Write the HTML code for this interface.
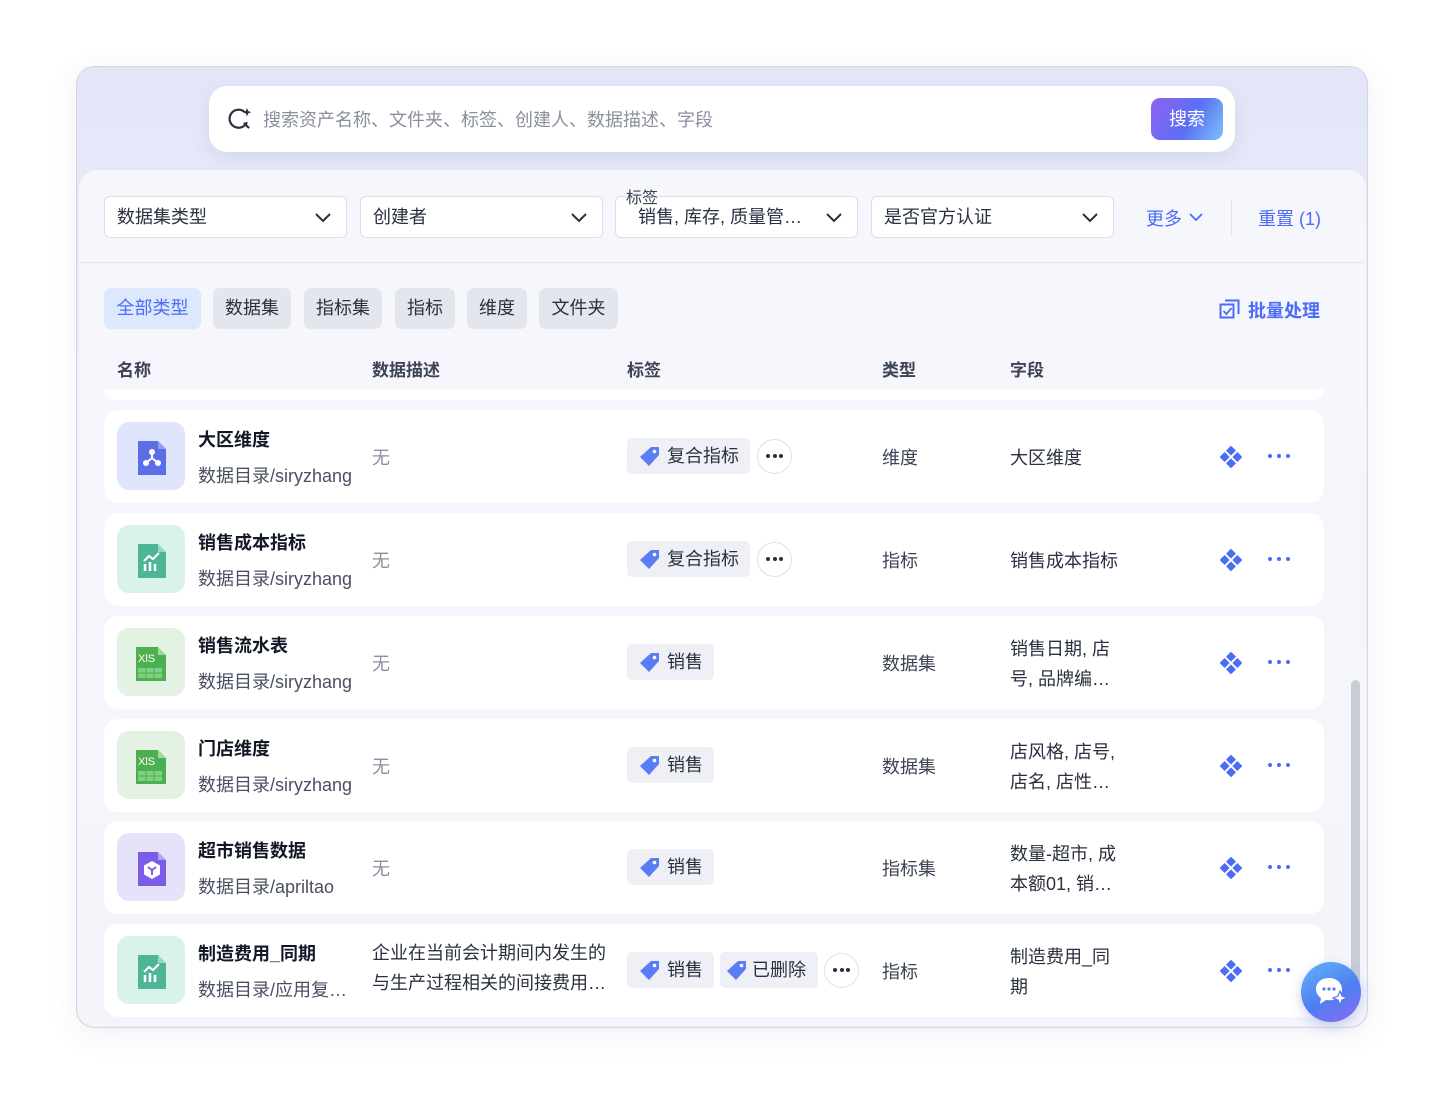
<!DOCTYPE html>
<html><head><meta charset="utf-8">
<style>
*{box-sizing:border-box;margin:0;padding:0}
body{width:1444px;height:1098px;background:#fff;font-family:"Liberation Sans","Noto Sans CJK SC",sans-serif;position:relative;overflow:hidden;color:#1d2433}
.a{position:absolute}
.frame{left:76px;top:66px;width:1292px;height:962px;border-radius:18px;background:linear-gradient(180deg,#e3e6f7 0%,#eceffb 40%,#f0f2fb 100%);border:1px solid #d4d7e2;box-shadow:0 6px 30px rgba(60,70,120,.08)}
.search{left:209px;top:86px;width:1026px;height:66px;background:#fff;border-radius:18px;box-shadow:0 6px 18px rgba(90,100,160,.12)}
.panel{left:79px;top:170px;width:1287px;height:856px;border-radius:18px;background:linear-gradient(180deg,#f6f7fc,#f4f5fb);}
.sel{height:42px;top:196px;width:243px;background:#fff;border:1px solid #dcdfe8;border-radius:6px;font-size:18px;line-height:40px;padding-left:12px;color:#2a3040}
.chev{position:absolute;right:14px;top:13px}
.pill{top:288px;height:41px;border-radius:7px;background:#e4e6ee;font-size:18px;line-height:41px;text-align:center;color:#2a3040}
.th{top:356px;font-size:17px;font-weight:bold;color:#3c4354}
.card{left:104px;width:1220px;height:93px;background:#fff;border-radius:14px}
.ic{left:13px;top:12px;width:68px;height:68px;border-radius:12px}
.t{left:94px;top:16px;font-size:18px;font-weight:bold;color:#121826}
.s{left:94px;top:52px;font-size:18px;color:#4a5063}
.no{left:268px;top:34px;font-size:18px;color:#8a8f9c}
.tag{top:28px;height:36px;background:#eef0f5;border-radius:5px;font-size:18px;line-height:36px;color:#2a3040;padding-left:40px}
.tag svg{position:absolute;left:12px;top:8px}
.more{top:29px;width:35px;height:35px;border:1.5px solid #dfe1e8;border-radius:50%;background:#fff}
.more i,.dots i{position:absolute;width:4px;height:4px;border-radius:50%}
.more i{top:14px;background:#2a3040}
.ty{left:778px;top:34px;font-size:18px;color:#3c4354}
.f{left:906px;top:34px;font-size:18px;color:#2a3040}
.f2{left:906px;top:18px;font-size:18px;line-height:30px;color:#2a3040}
.dia{left:1116px;top:36px}
.dots{left:1164px;top:44px;width:22px;height:4px}
.dots i{top:0;background:#4a6cf7}
</style></head><body>
<div class="a frame"></div>
<div class="a search">
  <svg class="a" style="left:18px;top:20px" width="26" height="26" viewBox="0 0 26 26"><path d="M17 5.5A9 9 0 1 0 19.5 17" fill="none" stroke="#2a3040" stroke-width="2.2" stroke-linecap="round"/><path d="M17.5 17.5l4 4" stroke="#2a3040" stroke-width="2.2" stroke-linecap="round"/><path d="M20 2l1.2 3 3 1.2-3 1.2L20 10.4l-1.2-3-3-1.2 3-1.2z" fill="#2a3040"/></svg>
  <div class="a" style="left:54px;top:20px;font-size:18px;color:#8a8f9c">搜索资产名称、文件夹、标签、创建人、数据描述、字段</div>
  <div class="a" style="left:942px;top:12px;width:72px;height:42px;border-radius:9px;background:linear-gradient(120deg,#8d63f2,#5b6ff4 55%,#7fc2fb);color:#fff;font-size:18px;line-height:42px;text-align:center">搜索</div>
</div>
<div class="a panel"></div>
<div class="a sel" style="left:104px">数据集类型<svg class="chev" width="18" height="14" viewBox="0 0 18 14"><path d="M2 4l7 7 7-7" fill="none" stroke="#2a3040" stroke-width="2"/></svg></div>
<div class="a sel" style="left:360px">创建者<svg class="chev" width="18" height="14" viewBox="0 0 18 14"><path d="M2 4l7 7 7-7" fill="none" stroke="#2a3040" stroke-width="2"/></svg></div>
<div class="a sel" style="left:615px;padding-left:22px">销售, 库存, 质量管…<svg class="chev" width="18" height="14" viewBox="0 0 18 14"><path d="M2 4l7 7 7-7" fill="none" stroke="#2a3040" stroke-width="2"/></svg></div>
<div class="a" style="left:626px;top:184px;font-size:16px;color:#3c4354;background:linear-gradient(#f6f7fc 60%,transparent 60%)">标签</div>
<div class="a sel" style="left:871px">是否官方认证<svg class="chev" width="18" height="14" viewBox="0 0 18 14"><path d="M2 4l7 7 7-7" fill="none" stroke="#2a3040" stroke-width="2"/></svg></div>
<div class="a" style="left:1146px;top:205px;font-size:18px;color:#4a6cf7">更多</div>
<svg class="a" style="left:1188px;top:211px" width="16" height="12" viewBox="0 0 16 12"><path d="M2 3l6 6 6-6" fill="none" stroke="#4a6cf7" stroke-width="1.8"/></svg>
<div class="a" style="left:1231px;top:199px;width:1px;height:36px;background:#dfe2ea"></div>
<div class="a" style="left:1258px;top:205px;font-size:18px;color:#4a6cf7">重置 (1)</div>
<div class="a" style="left:80px;top:262px;width:1284px;height:1px;background:#e2e4ec"></div>
<div class="a pill" style="left:104px;width:97px;background:#dde8fd;color:#4a6cf7">全部类型</div>
<div class="a pill" style="left:213px;width:78px">数据集</div>
<div class="a pill" style="left:304px;width:78px">指标集</div>
<div class="a pill" style="left:395px;width:60px">指标</div>
<div class="a pill" style="left:467px;width:60px">维度</div>
<div class="a pill" style="left:539px;width:79px">文件夹</div>
<svg class="a" style="left:1219px;top:299px" width="21" height="21" viewBox="0 0 21 21"><rect x="1.5" y="5.5" width="13" height="13" fill="none" stroke="#4a6cf7" stroke-width="2"/><path d="M6 1.5h13.5V15" fill="none" stroke="#4a6cf7" stroke-width="2"/><path d="M4.5 12l3 3 5-6" fill="none" stroke="#4a6cf7" stroke-width="1.8"/></svg>
<div class="a" style="left:1248px;top:297px;font-size:18px;color:#4a6cf7;font-weight:bold">批量处理</div>
<div class="a th" style="left:117px">名称</div>
<div class="a th" style="left:372px">数据描述</div>
<div class="a th" style="left:627px">标签</div>
<div class="a th" style="left:882px">类型</div>
<div class="a th" style="left:1010px">字段</div>
<div class="a" style="left:104px;top:389px;width:1220px;height:11px;background:#fff;border-radius:0 0 14px 14px"></div>
<div class="a" style="left:1351px;top:680px;width:9px;height:312px;border-radius:5px;background:#c9ccd5"></div>

<div class="a card" style="top:410px">
 <div class="a ic" style="background:#dfe5fc"><svg class="a" style="left:18px;top:16px" width="36" height="40" viewBox="0 0 36 40"><path d="M3 3h20l8 8v26H3z" fill="#5b6ee8"/><path d="M23 3v8h8z" fill="#8f9cf0"/><circle cx="17" cy="14" r="3" fill="#fff"/><circle cx="11" cy="25" r="3" fill="#fff"/><circle cx="23" cy="25" r="3" fill="#fff"/><path d="M17 14v6l-6 5M17 20l6 5" stroke="#fff" stroke-width="2" fill="none"/></svg></div>
 <div class="a t">大区维度</div><div class="a s">数据目录/siryzhang</div><div class="a no">无</div>
 <div class="a tag" style="left:523px;width:123px"><svg width="22" height="22" viewBox="0 0 22 22"><path d="M12 1h8v8L10 20 1 11z" fill="#5b7cf7"/><circle cx="15.5" cy="5.5" r="1.8" fill="#fff"/></svg>复合指标</div>
 <div class="a more" style="left:653px"><i style="left:8px"></i><i style="left:14.5px"></i><i style="left:21px"></i></div>
 <div class="a ty">维度</div><div class="a f">大区维度</div>
 <svg class="a dia" width="22" height="22" viewBox="0 0 22 22"><g fill="#4a6cf7" transform="rotate(45 11 11)"><rect x="3" y="3" width="7" height="7"/><rect x="12" y="3" width="7" height="7"/><rect x="3" y="12" width="7" height="7"/><rect x="12" y="12" width="7" height="7"/></g></svg>
 <div class="a dots"><i style="left:0"></i><i style="left:9px"></i><i style="left:18px"></i></div>
</div>

<div class="a card" style="top:513px">
 <div class="a ic" style="background:#daf3ea"><svg class="a" style="left:18px;top:16px" width="36" height="40" viewBox="0 0 36 40"><path d="M3 3h20l8 8v26H3z" fill="#4fb597"/><path d="M23 3v8h8z" fill="#93dcc4"/><path d="M10 30v-7M15 30v-9M20 30v-7" stroke="#fff" stroke-width="2.5"/><path d="M9 20l5-5 4 3 6-6" stroke="#fff" stroke-width="2" fill="none"/></svg></div>
 <div class="a t">销售成本指标</div><div class="a s">数据目录/siryzhang</div><div class="a no">无</div>
 <div class="a tag" style="left:523px;width:123px"><svg width="22" height="22" viewBox="0 0 22 22"><path d="M12 1h8v8L10 20 1 11z" fill="#5b7cf7"/><circle cx="15.5" cy="5.5" r="1.8" fill="#fff"/></svg>复合指标</div>
 <div class="a more" style="left:653px"><i style="left:8px"></i><i style="left:14.5px"></i><i style="left:21px"></i></div>
 <div class="a ty">指标</div><div class="a f">销售成本指标</div>
 <svg class="a dia" width="22" height="22" viewBox="0 0 22 22"><g fill="#4a6cf7" transform="rotate(45 11 11)"><rect x="3" y="3" width="7" height="7"/><rect x="12" y="3" width="7" height="7"/><rect x="3" y="12" width="7" height="7"/><rect x="12" y="12" width="7" height="7"/></g></svg>
 <div class="a dots"><i style="left:0"></i><i style="left:9px"></i><i style="left:18px"></i></div>
</div>

<div class="a card" style="top:616px">
 <div class="a ic" style="background:#e3f2e3"><svg class="a" style="left:16px;top:16px" width="38" height="40" viewBox="0 0 38 40"><path d="M3 3h22l8 8v26H3z" fill="#4caf50"/><path d="M25 3v8h8z" fill="#9edb9f"/><text x="5" y="18" font-size="11" fill="#fff" font-family="Liberation Sans">XlS</text><path d="M5 24h24v10H5z" fill="#7fcf82"/><path d="M5 29h24M13 24v10M21 24v10" stroke="#4caf50"/></svg></div>
 <div class="a t">销售流水表</div><div class="a s">数据目录/siryzhang</div><div class="a no">无</div>
 <div class="a tag" style="left:523px;width:87px"><svg width="22" height="22" viewBox="0 0 22 22"><path d="M12 1h8v8L10 20 1 11z" fill="#5b7cf7"/><circle cx="15.5" cy="5.5" r="1.8" fill="#fff"/></svg>销售</div>
 <div class="a ty">数据集</div><div class="a f2">销售日期, 店<br>号, 品牌编…</div>
 <svg class="a dia" width="22" height="22" viewBox="0 0 22 22"><g fill="#4a6cf7" transform="rotate(45 11 11)"><rect x="3" y="3" width="7" height="7"/><rect x="12" y="3" width="7" height="7"/><rect x="3" y="12" width="7" height="7"/><rect x="12" y="12" width="7" height="7"/></g></svg>
 <div class="a dots"><i style="left:0"></i><i style="left:9px"></i><i style="left:18px"></i></div>
</div>

<div class="a card" style="top:719px">
 <div class="a ic" style="background:#e3f2e3"><svg class="a" style="left:16px;top:16px" width="38" height="40" viewBox="0 0 38 40"><path d="M3 3h22l8 8v26H3z" fill="#4caf50"/><path d="M25 3v8h8z" fill="#9edb9f"/><text x="5" y="18" font-size="11" fill="#fff" font-family="Liberation Sans">XlS</text><path d="M5 24h24v10H5z" fill="#7fcf82"/><path d="M5 29h24M13 24v10M21 24v10" stroke="#4caf50"/></svg></div>
 <div class="a t">门店维度</div><div class="a s">数据目录/siryzhang</div><div class="a no">无</div>
 <div class="a tag" style="left:523px;width:87px"><svg width="22" height="22" viewBox="0 0 22 22"><path d="M12 1h8v8L10 20 1 11z" fill="#5b7cf7"/><circle cx="15.5" cy="5.5" r="1.8" fill="#fff"/></svg>销售</div>
 <div class="a ty">数据集</div><div class="a f2">店风格, 店号,<br>店名, 店性…</div>
 <svg class="a dia" width="22" height="22" viewBox="0 0 22 22"><g fill="#4a6cf7" transform="rotate(45 11 11)"><rect x="3" y="3" width="7" height="7"/><rect x="12" y="3" width="7" height="7"/><rect x="3" y="12" width="7" height="7"/><rect x="12" y="12" width="7" height="7"/></g></svg>
 <div class="a dots"><i style="left:0"></i><i style="left:9px"></i><i style="left:18px"></i></div>
</div>

<div class="a card" style="top:821px">
 <div class="a ic" style="background:#e6e2fa"><svg class="a" style="left:18px;top:16px" width="36" height="40" viewBox="0 0 36 40"><path d="M3 3h20l8 8v26H3z" fill="#7b5ce6"/><path d="M23 3v8h8z" fill="#b4a3f3"/><path d="M17 12l8 4.5v9L17 30l-8-4.5v-9z" fill="#fff"/><path d="M13 18l4 3 4-3M17 21v5" stroke="#7b5ce6" stroke-width="2" fill="none"/></svg></div>
 <div class="a t">超市销售数据</div><div class="a s">数据目录/apriltao</div><div class="a no">无</div>
 <div class="a tag" style="left:523px;width:87px"><svg width="22" height="22" viewBox="0 0 22 22"><path d="M12 1h8v8L10 20 1 11z" fill="#5b7cf7"/><circle cx="15.5" cy="5.5" r="1.8" fill="#fff"/></svg>销售</div>
 <div class="a ty">指标集</div><div class="a f2">数量-超市, 成<br>本额01, 销…</div>
 <svg class="a dia" width="22" height="22" viewBox="0 0 22 22"><g fill="#4a6cf7" transform="rotate(45 11 11)"><rect x="3" y="3" width="7" height="7"/><rect x="12" y="3" width="7" height="7"/><rect x="3" y="12" width="7" height="7"/><rect x="12" y="12" width="7" height="7"/></g></svg>
 <div class="a dots"><i style="left:0"></i><i style="left:9px"></i><i style="left:18px"></i></div>
</div>

<div class="a card" style="top:924px">
 <div class="a ic" style="background:#daf3ea"><svg class="a" style="left:18px;top:16px" width="36" height="40" viewBox="0 0 36 40"><path d="M3 3h20l8 8v26H3z" fill="#4fb597"/><path d="M23 3v8h8z" fill="#93dcc4"/><path d="M10 30v-7M15 30v-9M20 30v-7" stroke="#fff" stroke-width="2.5"/><path d="M9 20l5-5 4 3 6-6" stroke="#fff" stroke-width="2" fill="none"/></svg></div>
 <div class="a t">制造费用_同期</div><div class="a s">数据目录/应用复…</div>
 <div class="a" style="left:268px;top:14px;font-size:18px;line-height:30px;color:#2a3040">企业在当前会计期间内发生的<br>与生产过程相关的间接费用…</div>
 <div class="a tag" style="left:523px;width:87px"><svg width="22" height="22" viewBox="0 0 22 22"><path d="M12 1h8v8L10 20 1 11z" fill="#5b7cf7"/><circle cx="15.5" cy="5.5" r="1.8" fill="#fff"/></svg>销售</div>
 <div class="a tag" style="left:616px;width:98px;padding-left:32px"><svg style="left:6px" width="22" height="22" viewBox="0 0 22 22"><path d="M12 1h8v8L10 20 1 11z" fill="#5b7cf7"/><circle cx="15.5" cy="5.5" r="1.8" fill="#fff"/></svg>已删除</div>
 <div class="a more" style="left:720px"><i style="left:8px"></i><i style="left:14.5px"></i><i style="left:21px"></i></div>
 <div class="a ty">指标</div><div class="a f2">制造费用_同<br>期</div>
 <svg class="a dia" width="22" height="22" viewBox="0 0 22 22"><g fill="#4a6cf7" transform="rotate(45 11 11)"><rect x="3" y="3" width="7" height="7"/><rect x="12" y="3" width="7" height="7"/><rect x="3" y="12" width="7" height="7"/><rect x="12" y="12" width="7" height="7"/></g></svg>
 <div class="a dots"><i style="left:0"></i><i style="left:9px"></i><i style="left:18px"></i></div>
</div>

<div class="a" style="left:1301px;top:962px;width:60px;height:60px;border-radius:50%;background:linear-gradient(150deg,#62b4f8,#4f7ef2 55%,#8a6cf0);box-shadow:0 4px 12px rgba(80,100,200,.3)">
 <svg class="a" style="left:13px;top:14px" width="36" height="34" viewBox="0 0 36 34"><path d="M15 2C7 2 2 7 2 13c0 4 2 7 5 9l-1 6 6-4c1 0 2 .3 3 .3 8 0 13-5 13-11S23 2 15 2z" fill="#fff"/><circle cx="10" cy="13" r="1.6" fill="#4f7ef2"/><circle cx="15" cy="13" r="1.6" fill="#4f7ef2"/><circle cx="20" cy="13" r="1.6" fill="#4f7ef2"/><path d="M26 15l2 5 5 2-5 2-2 5-2-5-5-2 5-2z" fill="#fff" stroke="#5a78f0" stroke-width="1.2"/></svg>
</div>
</body></html>
